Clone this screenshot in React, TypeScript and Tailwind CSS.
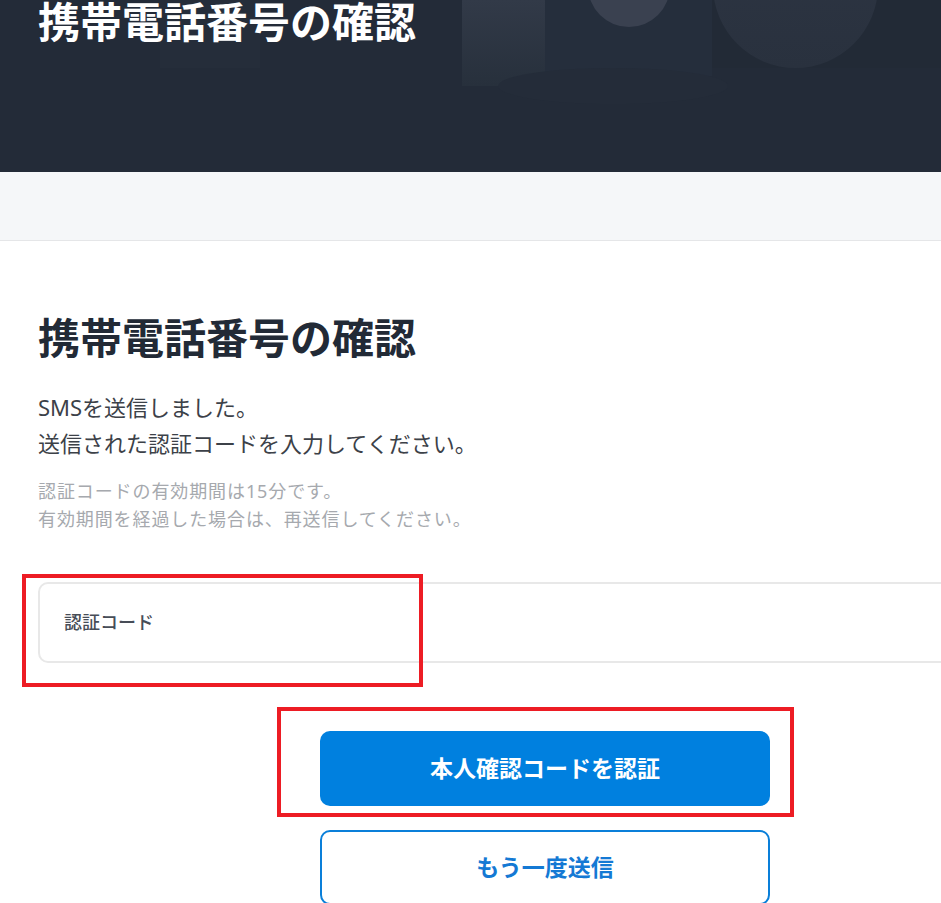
import React from 'react';

// 携帯電話番号の確認ページ
const HeroShapes = () => (
  <div className="pointer-events-none absolute inset-0 overflow-hidden">
    <div className="absolute left-[160px] top-0 h-[68px] w-[100px] bg-[#252d3a]" />
    <div className="absolute left-[462px] top-0 h-[86px] w-[83px] bg-gradient-to-b from-[#323a48] to-[#27303c]" />
    <div className="absolute left-[545px] top-0 h-[76px] w-[167px] bg-[#252e3c]" />
    <div className="absolute left-[588px] top-[-55px] h-[82px] w-[82px] rounded-full bg-[#3a4150]" />
    <div className="absolute left-[712px] top-0 h-[68px] w-[229px] bg-[#222a36]" />
    <div className="absolute left-[713px] top-[-98px] h-[166px] w-[165px] rounded-full bg-gradient-to-b from-[#2e3644] to-[#29313e]" />
    <div className="absolute left-[498px] top-[68px] h-[36px] w-[230px] rounded-[50%] bg-[#242c39]" />
  </div>
);

const App: React.FC = () => {
  return (
    <div
      className="relative w-[941px] h-[903px] overflow-hidden bg-white"
      style={{ fontFamily: '"Noto Sans", "Noto Sans CJK JP", sans-serif' }}
    >
      {/* Hero */}
      <section className="relative flex h-[172px] flex-col bg-[#232b38]">
        <HeroShapes />
        <h1 className="relative pl-[38px] text-[42px] leading-[44px] font-bold text-white">
          携帯電話番号の確認
        </h1>
      </section>

      {/* Gray band */}
      <div className="h-[69px] bg-[#f5f7f9] border-b border-[#e5e6e8]" />

      {/* Main */}
      <main className="flex w-[1052px] flex-col pl-[38px] pt-[71px]">
        <h2 className="text-[42px] leading-[52px] font-bold text-[#222a36]">
          携帯電話番号の確認
        </h2>

        <p className="mt-[25px] text-[22px] leading-[36px] text-[#3c4148]">
          SMSを送信しました。
          <br />
          送信された認証コードを入力してください。
        </p>

        <p className="mt-[16px] text-[18px] leading-[28px] tracking-[0.05em] text-[#a6a9ae]">
          認証コードの有効期間は15分です。
          <br />
          有効期間を経過した場合は、再送信してください。
        </p>

        <div className="mt-[49px] flex h-[81px] items-center rounded-[10px] border-2 border-[#e8e8e8] px-[24px]">
          <span className="text-[18px] font-medium text-[#474d57]">認証コード</span>
        </div>

        <div className="mt-[68px] flex flex-col items-center gap-[24px]">
          <button className="h-[75px] w-[450px] rounded-[10px] bg-[#0080df] text-[23px] font-bold text-white">
            本人確認コードを認証
          </button>
          <button className="h-[75px] w-[450px] rounded-[10px] border-2 border-[#0a7fd9] bg-white text-[23px] font-bold text-[#1479d4]">
            もう一度送信
          </button>
        </div>
      </main>

      {/* Annotation frames */}
      <div className="pointer-events-none absolute left-[22px] top-[574px] h-[113px] w-[401px] border-[4px] border-[#ed1c24]" />
      <div className="pointer-events-none absolute left-[277px] top-[707px] h-[110px] w-[517px] border-[4px] border-[#ed1c24]" />
    </div>
  );
};

export default App;
